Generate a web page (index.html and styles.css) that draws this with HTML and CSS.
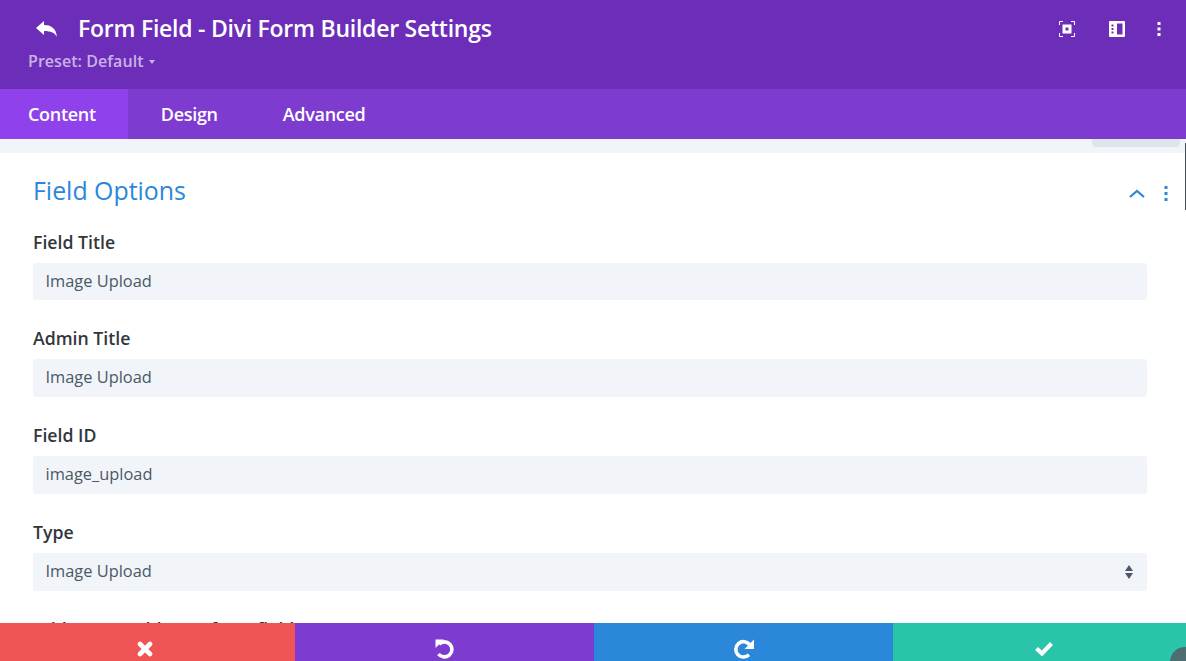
FILE: index.html
```html
<!DOCTYPE html>
<html lang="en">
<head>
  <meta charset="UTF-8">
  <title>Form Field - Divi Form Builder Settings</title>
  <link rel="stylesheet" href="styles.css">
</head>
<body>
  <div class="modal">
    <div class="header">
      <div class="header-top">
        <svg class="back-icon" width="22" height="16" viewBox="0 0 22 16"><path fill="#fff" d="M0 7 8 0v4c7 0 12 3 13 12-2-4-6-6-13-6v4z"/></svg>
        <h1>Form Field - Divi Form Builder Settings</h1>
        <div class="header-icons">
          <svg width="16" height="16" viewBox="0 0 16 16"><path fill="none" stroke="#fff" d="M.5 4V.5H4M12 .5h3.500V4M15.500 12v3.500H12M4 15.500H.5V12"/><path fill="#fff" fill-rule="evenodd" d="M3.500 3.500h9v9h-9zM6.500 6.500v3h3v-3z"/></svg>
          <svg width="16" height="16" viewBox="0 0 16 16"><path fill="#fff" fill-rule="evenodd" d="M1 0h14a1 1 0 0 1 1 1v14a1 1 0 0 1-1 1H1a1 1 0 0 1-1-1V1a1 1 0 0 1 1-1zM8 2.500v11h5.500v-11zM2.500 3.500v2h2v-2zM2.500 7v2h2V7zM2.500 10.500v2h2v-2z"/></svg>
          <svg class="dots" width="4" height="16" viewBox="0 0 4 16"><path fill="#fff" d="M.5 1h3v3h-3zM.5 6.500h3v3h-3zM.5 12h3v3h-3z"/></svg>
        </div>
      </div>
      <div class="preset">Preset: Default <span class="caret"></span></div>
    </div>

    <div class="tabs">
      <div class="tab active">Content</div>
      <div class="tab">Design</div>
      <div class="tab">Advanced</div>
    </div>

    <div class="body">
      <div class="strip"><div class="scroll-tab"></div></div>
      <div class="panel">
        <div class="panel-head">
          <h2>Field Options</h2>
          <svg class="toggle" width="16" height="9" viewBox="0 0 16 9"><path fill="none" stroke="#2b87da" stroke-width="2.200" d="m1 8 7-6 7 6"/></svg>
          <svg class="panel-dots" width="4" height="15" viewBox="0 0 4 15"><path fill="#2b87da" d="M.5 0h3v3h-3zM.5 6h3v3h-3zM.5 12h3v3h-3z"/></svg>
        </div>

        <div class="field">
          <label>Field Title</label>
          <div class="input">Image Upload</div>
        </div>
        <div class="field">
          <label>Admin Title</label>
          <div class="input">Image Upload</div>
        </div>
        <div class="field">
          <label>Field ID</label>
          <div class="input">image_upload</div>
        </div>
        <div class="field">
          <label>Type</label>
          <div class="input select">Image Upload
            <svg width="8" height="16" viewBox="0 0 8 16"><path fill="#4c5866" d="M4 1 8 7H0zM4 15 0 9h8z"/></svg>
          </div>
        </div>
        <div class="field">
          <label>Add name, add onto form field</label>
        </div>
      </div>
      <div class="edge-line"></div>
    </div>

    <div class="footer">
      <div class="foot-btn red">
        <svg width="16" height="16" viewBox="0 0 16 16"><path stroke="#fff" stroke-width="4.600" stroke-linecap="round" d="m3 3 10 10M13 3 3 13"/></svg>
      </div>
      <div class="foot-btn purple">
        <svg width="19" height="20" viewBox="0 0 19 20"><path fill="none" stroke="#fff" stroke-width="3.600" d="M4 5.200A7.500 7.500 0 1 1 3.500 15"/><path fill="#fff" d="M.5.500h8.500L.5 9z"/></svg>
      </div>
      <div class="foot-btn blue">
        <svg width="20" height="20" viewBox="0 0 20 20"><path fill="none" stroke="#fff" stroke-width="3.600" d="M15.500 5.500A7.700 7.700 0 1 0 15 15.800"/><path fill="#fff" d="M20 .5V10h-9.500z"/></svg>
      </div>
      <div class="foot-btn green">
        <svg width="18" height="14" viewBox="0 0 18 14"><path fill="none" stroke="#fff" stroke-width="4.200" d="m1.500 6.500 5.500 5 9.500-10"/></svg>
      </div>
      <div class="corner-badge"></div>
    </div>
  </div>
</body>
</html>
```

FILE: styles.css
```css
html, body {
  margin: 0;
  height: 100%;
  overflow: hidden;
}
body {
  font-family: "Open Sans", sans-serif;
  color: #32373c;
}
.modal {
  display: flex;
  flex-direction: column;
  height: 661px;
  position: relative;
}
.header {
  height: 89px;
  box-sizing: border-box;
  background-color: #6c2eb9;
  padding: 13px 20px 0 28px;
}
.header-top {
  display: flex;
  align-items: center;
  height: 32px;
}
.back-icon {
  margin: 0 20px 0 8px;
  flex-shrink: 0;
}
h1 {
  margin: -2px 0 0;
  font-size: 23px;
  line-height: 32px;
  font-weight: 600;
  color: #fff;
  letter-spacing: -0.25px;
}
.header-icons {
  margin-left: auto;
  display: flex;
  align-items: center;
  gap: 34px;
  margin-right: 5px;
}
.dots {
  margin-left: -2px;
}
.preset {
  margin-top: 5px;
  font-size: 16px;
  line-height: 22px;
  font-weight: 600;
  color: #c9b3e6;
  letter-spacing: 0.05px;
}
.caret {
  display: inline-block;
  border: 3px solid transparent;
  border-top: 4px solid #c9b3e6;
  border-bottom: 0;
  margin-left: 1px;
  vertical-align: 3px;
}
.tabs {
  display: flex;
  height: 50px;
  background-color: #7e3bd0;
}
.tab {
  padding: 0 33px 0 32px;
  font-size: 18px;
  line-height: 50px;
  font-weight: 600;
  color: #fff;
  letter-spacing: -0.3px;
}
.tab.active {
  background-color: #8f42ec;
  padding: 0 32px 0 28px;
}
.tab.active + .tab {
  padding-left: 33px;
}
.body {
  flex: 1;
  min-height: 0;
  overflow: hidden;
  position: relative;
}
.strip {
  height: 14px;
  background-color: #f1f5f9;
  display: flex;
  justify-content: flex-end;
  padding-right: 6px;
}
.scroll-tab {
  width: 88px;
  height: 8px;
  background-color: #dde4ec;
  border-radius: 0 0 4px 4px;
}
.panel {
  padding: 0 39px 0 33px;
}
.panel-head {
  display: flex;
  align-items: center;
  height: 78.600px;
  box-sizing: border-box;
}
h2 {
  margin: -4px auto 0 0;
  font-size: 24.900px;
  font-weight: 400;
  color: #2b87da;
}
.toggle {
  margin: 2px 0 0 0;
  transform: translateX(1px);
}
.panel-dots {
  margin: 2px -21px 0 20px;
}
.field {
  height: 96.800px;
}
label {
  display: block;
  font-size: 17.700px;
  line-height: 21px;
  font-weight: 540;
  color: #32373c;
}
.input {
  margin-top: 10px;
  height: 37.800px;
  box-sizing: border-box;
  line-height: 36px;
  padding: 0 13px 2px 12.500px;
  background-color: #f1f5f9;
  border-radius: 3px;
  font-size: 16.400px;
  font-weight: 530;
  color: #4c5866;
}
.select {
  display: flex;
  justify-content: space-between;
  align-items: center;
  padding-right: 14px;
}
.select svg {
  margin-top: 2px;
}
.edge-line {
  position: absolute;
  top: 4px;
  right: 0;
  width: 1px;
  height: 67px;
  background-color: #444c55;
}
.footer {
  display: flex;
  height: 38px;
  position: absolute;
  left: 0;
  right: 0;
  bottom: 0;
}
.foot-btn {
  display: flex;
  justify-content: center;
  align-items: center;
  padding-top: 14px;
  box-sizing: border-box;
}
.foot-btn svg {
  display: block;
}
.red { width: 295px; background-color: #ef5555; padding-right: 6px; }
.purple { width: 299px; background-color: #7e3bd0; }
.blue { width: 299px; background-color: #2b87da; }
.green { width: 293px; background-color: #29c4a9; padding-left: 8px; }
.corner-badge {
  position: absolute;
  right: -14px;
  bottom: -16px;
  width: 30px;
  height: 30px;
  border-radius: 50%;
  background-color: #4d6e70;
}
```
